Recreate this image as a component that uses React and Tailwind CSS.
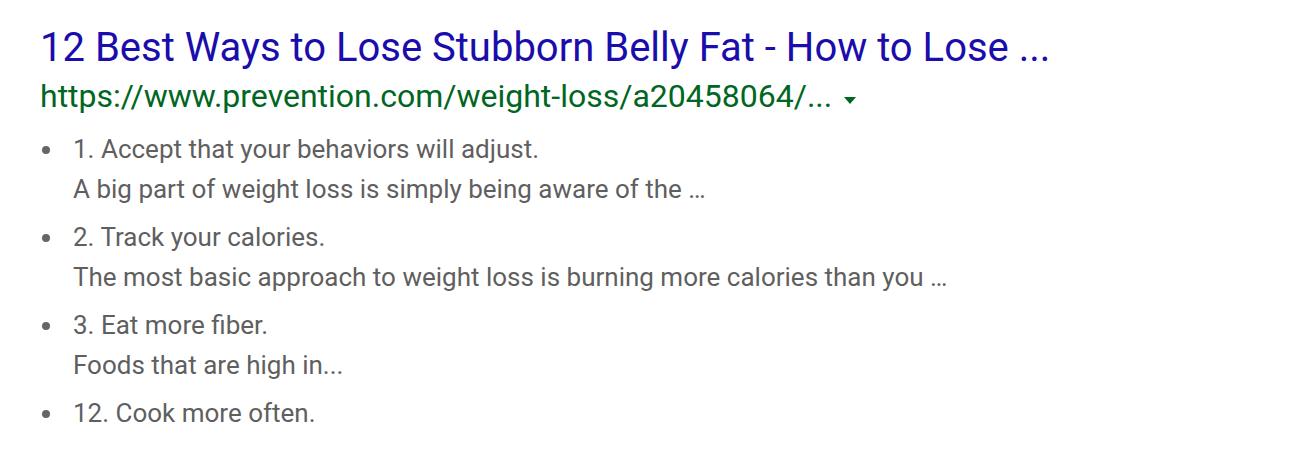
export default function App() {
  const items = [
    ["1. Accept that your behaviors will adjust.", "A big part of weight loss is simply being aware of the …"],
    ["2. Track your calories.", "The most basic approach to weight loss is burning more calories than you …"],
    ["3. Eat more fiber.", "Foods that are high in..."],
    ["12. Cook more often."],
  ];
  return (
    <div className="w-[1296px] h-[454px] bg-white pl-[40px] pt-[22px]" style={{ fontFamily: "Roboto, Arial, sans-serif" }}>
      <div className="text-[40px] leading-[52px] text-[#1a0dab]">12 Best Ways to Lose Stubborn Belly Fat - How to Lose ...</div>
      <div className="mt-[2px] flex items-start text-[32px] leading-[40px] text-[#006621]">
        <span>https://www.prevention.com/weight-loss/a20458064/...</span>
        <span className="ml-[12px] mt-[21px] w-0 h-0 border-l-[6px] border-r-[6px] border-t-[7px] border-l-transparent border-r-transparent border-t-[#006621]"></span>
      </div>
      <ul className="mt-[13px] flex flex-col gap-[8px] text-[26px] leading-[40px] text-[#5f5f5f]">
        {items.map((it, i) => (
          <li key={i} className="flex">
            <span className="w-[33px] shrink-0 flex pt-[17px]">
              <span className="ml-[2px] w-[8px] h-[8px] rounded-full bg-[#666666]"></span>
            </span>
            <div>
              <div>{it[0]}</div>
              {it[1] && <div>{it[1]}</div>}
            </div>
          </li>
        ))}
      </ul>
    </div>
  );
}
